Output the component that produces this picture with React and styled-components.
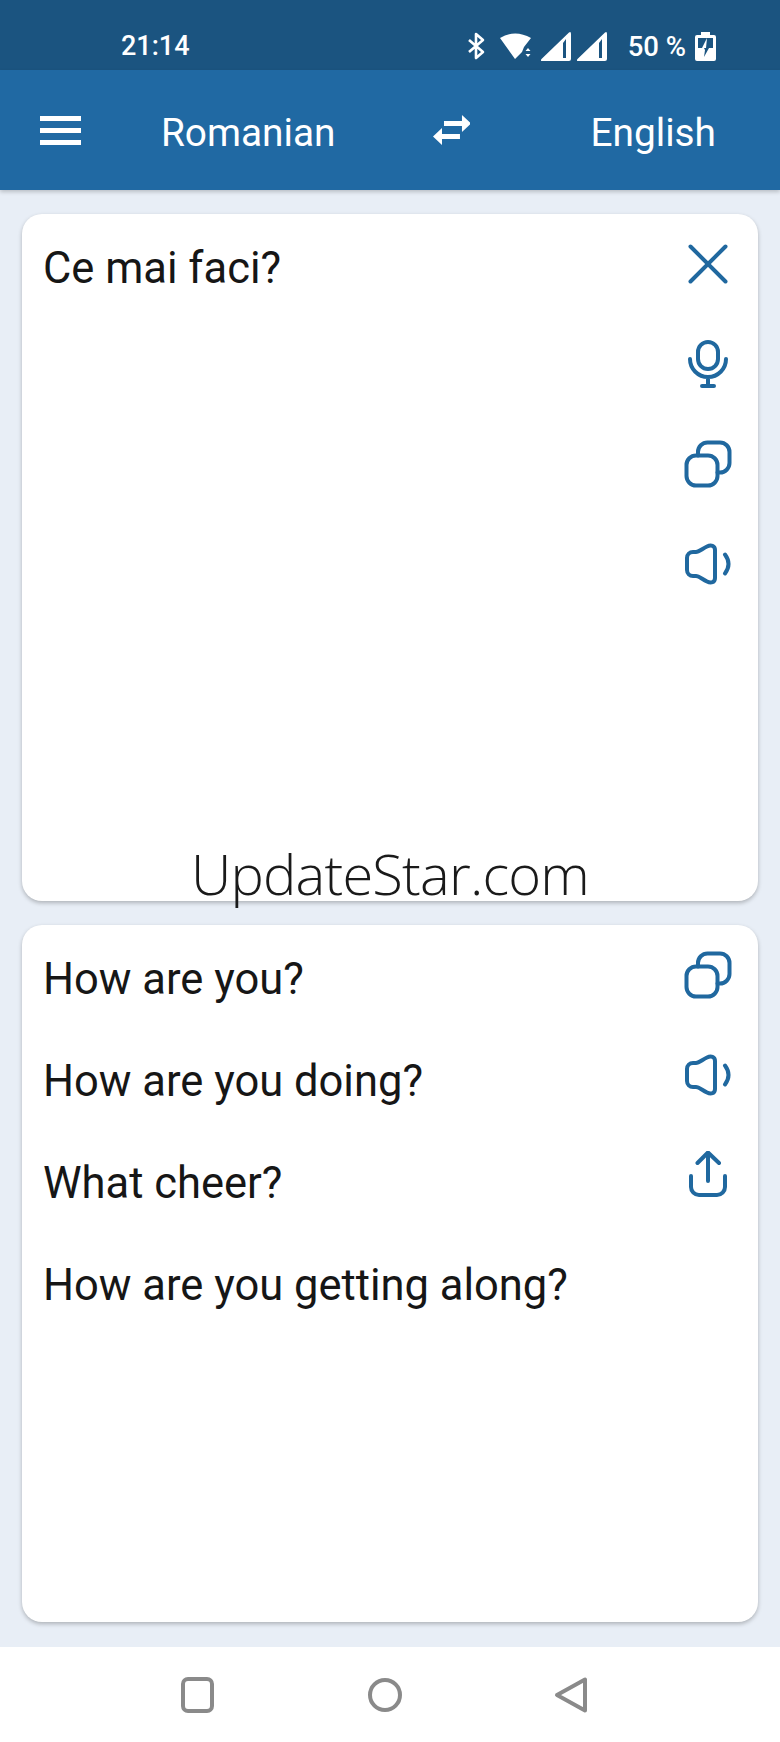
import React from 'react';
import styled, { createGlobalStyle } from 'styled-components';

const GlobalStyle = createGlobalStyle`
  html, body {
    margin: 0;
    padding: 0;
    background: #e8eef6;
  }
  * {
    box-sizing: border-box;
  }
`;

const Page = styled.div`
  position: relative;
  display: flex;
  flex-direction: column;
  width: 780px;
  height: 1742px;
  overflow: hidden;
  background: #e8eef6;
  font-family: Roboto, "Liberation Sans", sans-serif;
`;

const StatusBar = styled.div`
  display: flex;
  align-items: center;
  flex: 0 0 70px;
  padding: 22px 64px 0 121px;
  background: #1b5480;
  color: #fff;
  font-size: 27px;
  font-weight: 500;
`;

const Clock = styled.span`
  margin-right: auto;
`;

const StatusIcons = styled.div`
  display: flex;
  align-items: center;
  gap: 6px;
`;

const Battery = styled.span`
  margin: 0 9px 0 21px;
  font-size: 27.5px;
`;

const Header = styled.header`
  position: relative;
  z-index: 1;
  display: flex;
  align-items: center;
  flex: 0 0 120px;
  padding: 0 64px 0 40px;
  background: #2069a3;
  color: #fff;
  box-shadow: 0 2px 4px rgba(0, 0, 0, 0.2);
`;

const Menu = styled.button`
  display: flex;
  flex-direction: column;
  gap: 7px;
  width: 41px;
  padding: 0;
  border: none;
  background: none;

  span {
    height: 5px;
    background: #fff;
  }
`;

const Language = styled.div`
  font-size: 38.8px;
  line-height: 44px;
  margin-left: ${(props) => props.$left}px;
  margin-top: 5px;
`;

const Swap = styled.svg`
  margin-left: 97px;
  margin-top: -1px;
`;

const Main = styled.main`
  display: flex;
  flex-direction: column;
  flex: 1;
  gap: 24px;
  padding: 24px 22px 25px;
`;

const Card = styled.section`
  display: flex;
  justify-content: space-between;
  flex: ${(props) => (props.$height ? `0 0 ${props.$height}px` : 1)};
  padding: 4px 26px 0 21px;
  background: #fff;
  border-radius: 20px;
  box-shadow: 0 2px 4px rgba(0, 0, 0, 0.25);
`;

const Lines = styled.div`
  display: flex;
  flex-direction: column;
`;

const Line = styled.div`
  font-size: 43.5px;
  line-height: 102px;
  color: #161616;
`;

const Actions = styled.div`
  display: flex;
  flex-direction: column;
  gap: 52px;
  padding-top: 22px;
`;

const ActionIcon = styled.svg`
  display: block;
  width: 48px;
  height: 48px;
  fill: none;
  stroke: #20689f;
  stroke-width: 4;
  stroke-linecap: round;
  stroke-linejoin: round;
`;

const Watermark = styled.div`
  position: absolute;
  top: 836px;
  left: 0;
  right: 0;
  text-align: center;
  font-family: "Open Sans", sans-serif;
  font-weight: 300;
  font-size: 56px;
  letter-spacing: -0.8px;
  line-height: 74px;
  color: #1a1a1a;
`;

const NavBar = styled.nav`
  display: flex;
  align-items: center;
  justify-content: center;
  gap: 151px;
  flex: 0 0 95px;
  padding: 0 10px 0 0;
  background: #fff;
`;

const NavIcon = styled.svg`
  width: 36px;
  height: 38px;
  fill: none;
  stroke: #8a8a8a;
  stroke-width: 4;
  stroke-linejoin: round;
`;

const WifiSvg = styled.svg`
  margin: 0 3px 0 9px;
`;

const CloseIcon = () => (
  <ActionIcon viewBox="0 0 48 48">
    <path d="M6.5 6.5 41.5 41.5M41.5 6.5 6.5 41.5" />
  </ActionIcon>
);

const MicIcon = () => (
  <ActionIcon viewBox="0 0 48 48">
    <rect x="14" y="2" width="20" height="27" rx="10" />
    <path d="M6 19a18 18 0 0 0 36 0M24 37v8M18 46h12" />
  </ActionIcon>
);

const CopyIcon = () => (
  <ActionIcon viewBox="0 0 48 48">
    <rect x="2.5" y="15.5" width="31" height="30" rx="9.5" />
    <path d="M14 15.5V12a9.5 9.5 0 0 1 9.5-9.5h12.5a9.5 9.5 0 0 1 9.500 9.500v11a9.5 9.5 0 0 1-9.500 9.500h-2.500" />
  </ActionIcon>
);

const SpeakerIcon = () => (
  <ActionIcon viewBox="0 0 48 48">
    <path d="M9 12h3c3 0 6-3 11-5.500 4-2 8-1 8 3.500v28c0 4.500-4 5.500-8 3.500-5-2.500-8-5.500-11-5.500H9a6 6 0 0 1-6-6V18a6 6 0 0 1 6-6z" />
    <path d="M41 14.500Q48 24 41 33.500" />
  </ActionIcon>
);

const ShareIcon = () => (
  <ActionIcon viewBox="0 0 48 48">
    <path d="M24 3v27M13.500 12 24 1.500 35 12M7 25v11a8 8 0 0 0 8 8h18a8 8 0 0 0 8-8V25" />
  </ActionIcon>
);

const BluetoothIcon = () => (
  <svg width="18" height="28" viewBox="0 0 18 28" fill="none" stroke="#fff" strokeWidth="2.6" strokeLinejoin="round">
    <path d="M2 8 16 20 9 26V2L16 8 2 20" />
  </svg>
);

const WifiIcon = () => (
  <WifiSvg width="32" height="28" viewBox="0 0 32 28" fill="#fff">
    <path d="M0 6Q15-3 31 6L24 15 22 20 15 27z" />
    <path d="M28 16l2.500 3h-5zM28 25l2.500-3h-5z" />
  </WifiSvg>
);

const SignalIcon = () => (
  <svg width="30" height="29" viewBox="0 0 30 29" fill="#fff" fillRule="evenodd">
    <path d="M1 29Q-1 29 .5 27L28 .5Q30-1 30 2V27Q30 29 28 29zM22 11V26H25V7z" />
  </svg>
);

const BatteryIcon = () => (
  <svg width="21" height="29" viewBox="0 0 21 29">
    <path fill="#fff" d="M6 0h9v3h4a2 2 0 0 1 2 2v22a2 2 0 0 1-2 2H2a2 2 0 0 1-2-2V5a2 2 0 0 1 2-2h4z" />
    <rect x="3" y="6" width="15" height="10" fill="#1b5480" />
    <path fill="#fff" d="M12 6 7 16h4z" />
    <path fill="#1b5480" d="M9 16h5l-5 9 1-7z" />
  </svg>
);

const App = () => {
  return (
    <Page>
      <GlobalStyle />
      <StatusBar>
        <Clock>21:14</Clock>
        <StatusIcons>
          <BluetoothIcon />
          <WifiIcon />
          <SignalIcon />
          <SignalIcon />
        </StatusIcons>
        <Battery>50 %</Battery>
        <BatteryIcon />
      </StatusBar>
      <Header>
        <Menu aria-label="Menu">
          <span />
          <span />
          <span />
        </Menu>
        <Language $left={80}>Romanian</Language>
        <Swap width="38" height="30" viewBox="0 0 38 30" fill="#fff">
          <path d="M11 6h18V0l9 8.500-9 8.500v-6H11zM27 19H9v-6L0 21.500 9 30v-6h18z" />
        </Swap>
        <Language $left={120}>English</Language>
      </Header>
      <Main>
        <Card $height={687}>
          <Lines>
            <Line>Ce mai faci?</Line>
          </Lines>
          <Actions>
            <CloseIcon />
            <MicIcon />
            <CopyIcon />
            <SpeakerIcon />
          </Actions>
        </Card>
        <Card>
          <Lines>
            <Line>How are you?</Line>
            <Line>How are you doing?</Line>
            <Line>What cheer?</Line>
            <Line>How are you getting along?</Line>
          </Lines>
          <Actions>
            <CopyIcon />
            <SpeakerIcon />
            <ShareIcon />
          </Actions>
        </Card>
      </Main>
      <NavBar>
        <NavIcon viewBox="0 0 36 38">
          <rect x="3" y="3" width="29" height="32" rx="5" />
        </NavIcon>
        <NavIcon viewBox="0 0 36 38">
          <circle cx="18" cy="19" r="15" />
        </NavIcon>
        <NavIcon viewBox="0 0 36 38">
          <path d="M31 3.500V34.500L3 19z" />
        </NavIcon>
      </NavBar>
      <Watermark>UpdateStar.com</Watermark>
    </Page>
  );
};

export default App;
